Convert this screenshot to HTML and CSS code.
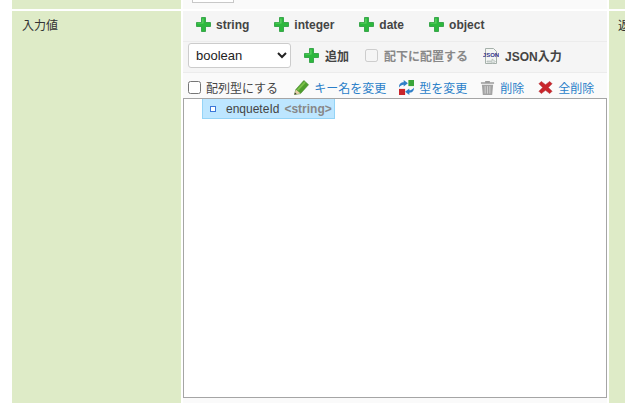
FILE: index.html
```html
<!DOCTYPE html>
<html lang="ja">
<head>
    <meta charset="UTF-8">
    <meta name="viewport" content="width=device-width, initial-scale=1.0">
    <title>入力値</title>
    <link rel="stylesheet" href="styles.css">
</head>

<body>
    <svg class="defs" width="0" height="0">
        <symbol id="plus" viewBox="0 0 15 15">
            <path d="M5.500 .5h4v5h5v4h-5v5h-4v-5h-5v-4h5z" fill="#2db83d" stroke="#249a3a" stroke-width=".8"/>
            <path d="M6.300 1.500h1.200v5h-6v-.8h4.800z" fill="#5fd465"/>
        </symbol>
    </svg>

    <div class="form-table">
        <div class="row row-top">
            <div class="label"></div>
            <div class="value"><div class="top-input"></div></div>
            <div class="label-right"></div>
        </div>

        <div class="row row-main">
            <div class="label">入力値</div>
            <div class="value">
                <div class="bar types">
                    <span class="tool"><svg class="icon"><use href="#plus"/></svg>string</span>
                    <span class="tool"><svg class="icon"><use href="#plus"/></svg>integer</span>
                    <span class="tool"><svg class="icon"><use href="#plus"/></svg>date</span>
                    <span class="tool"><svg class="icon"><use href="#plus"/></svg>object</span>
                </div>
                <div class="bar adds">
                    <select class="type-select">
                        <option>boolean</option>
                    </select>
                    <span class="tool add"><svg class="icon"><use href="#plus"/></svg>追加</span>
                    <label class="under"><input type="checkbox" disabled>配下に配置する</label>
                    <span class="tool json">
                        <svg class="icon-json" viewBox="0 0 16 16">
                            <path d="M2.500 .5h8l3 3v12h-11z" fill="#f4f6f4" stroke="#a5b0aa"/>
                            <path d="M4 13h5v-2l3.500 2.500-3.500 2.500v-2h-5z" fill="#dfe5e2" stroke="#a9b2ae" stroke-width=".6"/>
                            <text x="8" y="9" class="json-mark">JSON</text>
                        </svg>
                        JSON入力
                    </span>
                </div>
                <div class="actions">
                    <label class="array"><input type="checkbox">配列型にする</label>
                    <a class="action rename">
                        <svg class="icon" viewBox="0 0 16 16">
                            <path d="M.5 15.500l1.500-5.500 8.500-9.500 5 4.500-8.500 9.500z" fill="#4f9e2e" stroke="#3a8024" stroke-width=".6"/>
                            <path d="M3 10l8-8.500 1.500 1.300-8 8.700z" fill="#7cc04a"/>
                            <path d="M.5 15.500l1.500-5.500 5 4.500z" fill="#e6cfa8"/>
                            <path d="M.5 15.500l.6-2.200 1.700 1.500z" fill="#333"/>
                        </svg>
                        キー名を変更
                    </a>
                    <a class="action change">
                        <svg class="icon" viewBox="0 0 16 16">
                            <rect x="0" y="9.500" width="6.500" height="6.500" fill="#c9252b"/>
                            <rect x="10" y="0" width="6" height="6.500" fill="#3aa53a"/>
                            <path d="M0 8c0-4 2-5.500 5-5.500v-2.500l4.500 3.500-4.500 3.500v-2c-2 0-3.500 1-5 3z" fill="#2f7fc8"/>
                            <path d="M16 8c0 4-2 5.500-5 5.500v2.500l-4.500-3.500 4.500-3.500v2c2 0 3.500-1 5-3z" fill="#2f7fc8"/>
                        </svg>
                        型を変更
                    </a>
                    <a class="action remove">
                        <svg class="icon" viewBox="0 0 16 16">
                            <path d="M1 2.500h14v1.500h-14zM5.500 1h5v1.500h-5z" fill="#9c9c9c"/>
                            <path d="M2 5h12l-1 11h-10z" fill="#a3a3a3"/>
                            <path d="M5.500 6.500v8M8 6.500v8M10.500 6.500v8" stroke="#d4d4d4"/>
                        </svg>
                        削除
                    </a>
                    <a class="action clear">
                        <svg class="icon" viewBox="0 0 16 16">
                            <path d="M3.500 1.500l4.500 3.500 4.500-3.500 2.500 2.500-4 4 4 4-2.500 2.500-4.500-3.500-4.500 3.500-2.500-2.500 4-4-4-4z" fill="#c9252b" stroke="#a51d22" stroke-width=".5"/>
                        </svg>
                        全削除
                    </a>
                </div>
                <div class="tree">
                    <div class="node">
                        <span class="node-mark"></span>
                        <span class="node-key">enqueteId</span>
                        <span class="node-type">&lt;string&gt;</span>
                    </div>
                </div>
            </div>
            <div class="label-right">返</div>
        </div>
    </div>
</body>
</html>
```

FILE: styles.css
```css
/* General Styles */
html, body {
    margin: 0;
    padding: 0;
    height: 410px;
    overflow: hidden;
    background-color: #fff;
}

body {
    font-family: "Liberation Sans", "Noto Sans CJK JP", sans-serif;
    font-size: 12px;
    color: #333;
}

.defs {
    display: block;
    height: 0;
}

.form-table {
    width: 680px;
    padding-left: 12px;
}

.row {
    display: grid;
    grid-template-columns: 169px 424px 60px;
    column-gap: 2px;
}

.row-top {
    height: 9px;
    margin-bottom: 2px;
}

.row-main {
    height: 392px;
}

.label, .label-right {
    background-color: #deebc7;
    line-height: 30px;
    padding-left: 10px;
}

.label-right {
    padding-left: 9px;
}

.value {
    background-color: #fafafa;
    display: flex;
    flex-direction: column;
}

.top-input {
    width: 40px;
    height: 2px;
    margin-left: 9px;
    background-color: #fff;
    border: 1px solid #c8c8c8;
    border-top: none;
}

/* Toolbars */
.bar {
    display: flex;
    align-items: center;
    background-color: #f5f5f5;
    border-bottom: 1px solid #ececec;
    box-sizing: border-box;
}

.types {
    height: 31px;
    padding: 0 0 3px 13px;
    gap: 25px;
}

.types .tool {
    gap: 5px;
}

.adds {
    height: 31px;
    padding: 0 0 3px 5px;
}

.tool {
    display: flex;
    align-items: center;
    gap: 6px;
    font-weight: bold;
    color: #444;
}

.icon {
    width: 15px;
    height: 15px;
    flex: none;
}

.type-select {
    width: 103px;
    height: 25px;
    font-family: inherit;
    font-size: 13px;
    color: #222;
    background-color: #fff;
    border: 1px solid #ccc;
    border-radius: 3px;
    padding-left: 3px;
}

.add {
    margin-left: 13px;
}

.under {
    display: flex;
    align-items: center;
    margin-left: 16px;
    color: #888;
    font-weight: bold;
}

.under input {
    width: 13px;
    height: 13px;
    margin: 0 6px 0 0;
}

.json {
    margin-left: 15px;
}

.icon-json {
    width: 16px;
    height: 16px;
}

.json-mark {
    font-size: 6px;
    font-weight: bold;
    fill: #33338a;
    text-anchor: middle;
}

/* Action row */
.actions {
    display: flex;
    align-items: center;
    height: 25px;
    padding: 3px 0 0 5px;
    box-sizing: border-box;
}

.array {
    display: flex;
    align-items: center;
    color: #444;
}

.array input {
    width: 13px;
    height: 13px;
    margin: 0 5px 0 0;
}

.action {
    display: flex;
    align-items: center;
    gap: 5px;
    color: #2a7fc9;
    margin-left: 13px;
}

.rename {
    margin-left: 16px;
}

.clear {
    margin-left: 14px;
}

/* Tree */
.tree {
    height: 300px;
    box-sizing: border-box;
    background-color: #fff;
    border: 1px solid #a5a5a5;
}

.node {
    display: inline-flex;
    align-items: center;
    height: 20px;
    box-sizing: border-box;
    margin-left: 18px;
    padding: 0 2px 0 7px;
    background-color: #bde6ff;
    border: 1px solid #94d4f7;
    border-top: none;
}

.node-mark {
    width: 4px;
    height: 4px;
    border: 1px solid #3b78d8;
    background-color: #fff;
    margin-right: 10px;
}

.node-key {
    color: #444;
    margin-right: 5px;
}

.node-type {
    color: #888;
    font-weight: bold;
}
```
